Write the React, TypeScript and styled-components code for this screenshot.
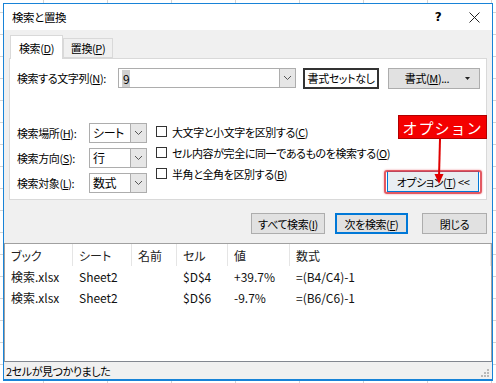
import React from 'react';
import styled, {createGlobalStyle} from 'styled-components';

const Global = createGlobalStyle`
  html, body {
    margin: 0;
    padding: 0;
    width: 496px;
    height: 383px;
    overflow: hidden;
    background-color: #fff;
    background-image:
      linear-gradient(to right, transparent 43px, #d4d4d4 43px, #d4d4d4 44px, transparent 44px),
      linear-gradient(to bottom, transparent 12px, #d4d4d4 12px, #d4d4d4 13px, transparent 13px);
    background-size: 64px 100%, 100% 22px;
    font-family: 'Noto Sans CJK JP', 'Noto Sans', sans-serif;
    font-size: 11px;
    font-feature-settings: 'palt';
    letter-spacing: -0.4px;
    white-space: nowrap;
    color: #000;
  }
`;

const Stage = styled.div`
  position: relative;
  width: 496px;
  height: 383px;
  padding: 3px 0 0 3px;
  box-sizing: border-box;
`;

const Dialog = styled.div`
  width: 490px;
  height: 378px;
  box-sizing: border-box;
  border: 1px solid #1883d7;
  border-bottom-width: 2px;
  display: flex;
  flex-direction: column;
  background: #f0f0f0;
`;

const TitleBar = styled.div`
  height: 26px;
  flex: none;
  background: #fff;
  display: flex;
  align-items: center;
  padding-left: 8px;
  font-size: 11.5px;
`;

const Title = styled.span`
  flex: 1;
`;

const TitleIcon = styled.span`
  width: 36px;
  display: flex;
  align-items: center;
  justify-content: center;
  font-size: 12px;
  font-weight: bold;
  font-family: 'DejaVu Sans', sans-serif;
`;

const Body = styled.div`
  flex: 1;
  display: flex;
  flex-direction: column;
  min-height: 0;
`;

const Tabs = styled.div`
  display: flex;
  align-items: flex-end;
  margin-top: 5px;
  padding-left: 6px;
  position: relative;
  z-index: 1;
`;

const Tab = styled.div<{$active?: boolean}>`
  box-sizing: border-box;
  height: ${p => (p.$active ? 24 : 20)}px;
  width: ${p => (p.$active ? 53 : 50)}px;
  background: ${p => (p.$active ? '#fff' : '#f0f0f0')};
  border: 1px solid #d9d9d9;
  border-bottom: ${p => (p.$active ? 'none' : '1px solid #d9d9d9')};
  margin-bottom: ${p => (p.$active ? -1 : 0)}px;
  display: flex;
  align-items: center;
  justify-content: center;
  padding-top: ${p => (p.$active ? 1 : 0)}px;
`;

const Panel = styled.div`
  margin: 0 5px;
  height: 142px;
  box-sizing: border-box;
  background: #fff;
  border: 1px solid #d9d9d9;
  padding: 9px 7px 6px 7px;
  display: flex;
  flex-direction: column;
`;

const Row = styled.div`
  display: flex;
  align-items: center;
  height: 20px;
`;

const FindLabel = styled.span`
  width: 101px;
  flex: none;
`;

const Combo = styled.div<{$width: number}>`
  width: ${p => p.$width}px;
  flex: none;
  height: 20px;
  box-sizing: border-box;
  border: 1px solid #adadad;
  display: flex;
  background: #fff;
`;

const ComboText = styled.span<{$selected?: boolean}>`
  flex: 1;
  display: flex;
  align-items: center;
  padding-left: 3px;
  font-size: 12px;

  span {
    background: ${p => (p.$selected ? '#cfcfcf' : 'transparent')};
    padding: 0 1px;
  }
`;

const ComboArrow = styled.span`
  width: 15px;
  border-left: 1px solid #adadad;
  background: #e6e6e6;
  display: flex;
  align-items: center;
  justify-content: center;
`;

const Button = styled.button<{$width: number; $tone?: 'plain' | 'strong' | 'default' | 'focus'}>`
  width: ${p => p.$width}px;
  flex: none;
  height: 21px;
  box-sizing: border-box;
  font-family: inherit;
  font-size: 11px;
  font-feature-settings: 'palt';
  letter-spacing: -0.4px;
  white-space: nowrap;
  color: #000;
  padding: 0;
  display: flex;
  align-items: center;
  justify-content: center;
  background: ${p => (p.$tone === 'strong' ? '#fff' : p.$tone === 'focus' ? '#e9eef2' : '#e1e1e1')};
  border: ${p =>
    p.$tone === 'strong'
      ? '2px solid #333'
      : p.$tone === 'default' || p.$tone === 'focus'
        ? '1px solid #0078d7'
        : '1px solid #adadad'};
  box-shadow: ${p => (p.$tone === 'default' ? 'inset 0 0 0 1px #0078d7' : 'none')};
`;

const Caret = styled.svg`
  margin-left: auto;
  margin-right: 9px;
`;

const Options = styled.div`
  display: flex;
  margin-top: 34px;
  flex: 1;
`;

const SelectCol = styled.div`
  display: flex;
  flex-direction: column;
  gap: 4px;
  flex: none;
`;

const SelectRow = styled.div`
  display: flex;
  align-items: center;
  height: 21px;
`;

const SelectLabel = styled.span`
  width: 72px;
`;

const CheckCol = styled.div`
  display: flex;
  flex-direction: column;
  margin-left: 9px;
  margin-top: -1px;
  flex: none;
`;

const CheckRow = styled.label`
  display: flex;
  align-items: center;
  height: 21px;
  gap: 5px;
`;

const Box = styled.span`
  width: 11px;
  height: 11px;
  box-sizing: border-box;
  border: 1px solid #333;
  background: #fff;
`;

const OptionSlot = styled.div`
  flex: 1;
  min-width: 0;
  display: flex;
  align-items: flex-end;
  justify-content: flex-end;
  padding-bottom: 1px;
`;

const ButtonBar = styled.div`
  display: flex;
  justify-content: flex-end;
  margin-top: 13px;
  padding-right: 5px;
  gap: 10px;

  > :last-child {
    margin-left: 4px;
  }
`;

const List = styled.div`
  margin-top: 9px;
  flex: 1;
  background: #fff;
  border: 1px solid #a0a0a0;
  border-bottom-color: #828790;
  display: flex;
  flex-direction: column;
  font-size: 12px;
  letter-spacing: 0;
`;

const Grid = styled.div`
  display: grid;
  grid-template-columns: 68px 59px 45px 51px 62px 1fr;
`;

const HeadCell = styled.div`
  height: 22px;
  display: flex;
  align-items: center;
  padding-left: 6px;
  border-right: 1px solid #e5e5e5;
  color: #222;
`;

const Cell = styled.div`
  height: 21px;
  display: flex;
  align-items: center;
  padding-left: 6px;
  color: #111;
`;

const Status = styled.div`
  height: 17px;
  flex: none;
  display: flex;
  align-items: center;
  padding-left: 2px;
  position: relative;
`;

const Grip = styled.svg`
  position: absolute;
  right: 2px;
  bottom: 1px;
`;

const Callout = styled.div`
  position: absolute;
  left: 398px;
  top: 115px;
  width: 89px;
  height: 24px;
  box-sizing: border-box;
  background: #f40000;
  border: 1px solid #b00000;
  color: #fff;
  font-size: 15px;
  font-feature-settings: normal;
  display: flex;
  align-items: center;
  justify-content: center;
  letter-spacing: 1px;
`;

const Highlight = styled.div`
  position: absolute;
  left: 384px;
  top: 170px;
  width: 98px;
  height: 24px;
  box-sizing: border-box;
  border: 2px solid rgba(222, 60, 70, 0.85);
  border-radius: 3px;
  box-shadow: 0 0 2px rgba(222, 60, 70, 0.6);
`;

const Arrow = styled.svg`
  position: absolute;
  left: 430px;
  top: 139px;
`;

const Chevron = () => (
  <svg width="9" height="6" viewBox="0 0 9 6">
    <path d="M1 1 L4.5 4.5 L8 1" fill="none" stroke="#555" strokeWidth="1" />
  </svg>
);

const Select = ({value}: {value: string}) => (
  <Combo $width={58}>
    <ComboText>{value}</ComboText>
    <ComboArrow>
      <Chevron />
    </ComboArrow>
  </Combo>
);

const columns = ['ブック', 'シート', '名前', 'セル', '値', '数式'];
const rows = [
  ['検索.xlsx', 'Sheet2', '', '$D$4', '+39.7%', '=(B4/C4)-1'],
  ['検索.xlsx', 'Sheet2', '', '$D$6', '-9.7%', '=(B6/C6)-1'],
];

export default function App() {
  return (
    <Stage>
      <Global />
      <Dialog>
        <TitleBar>
          <Title>検索と置換</Title>
          <TitleIcon>?</TitleIcon>
          <TitleIcon>
            <svg width="11" height="11" viewBox="0 0 11 11">
              <path d="M0.5 0.5 L10.5 10.5 M10.5 0.5 L0.5 10.5" stroke="#222" strokeWidth="1" />
            </svg>
          </TitleIcon>
        </TitleBar>
        <Body>
          <Tabs>
            <Tab $active>
              検索(<u>D</u>)
            </Tab>
            <Tab>
              置換(<u>P</u>)
            </Tab>
          </Tabs>
          <Panel>
            <Row>
              <FindLabel>
                検索する文字列(<u>N</u>):
              </FindLabel>
              <Combo $width={178}>
                <ComboText $selected>
                  <span>9</span>
                </ComboText>
                <ComboArrow>
                  <Chevron />
                </ComboArrow>
              </Combo>
              <Button $width={76} $tone="strong" style={{marginLeft: 7}}>
                書式セットなし
              </Button>
              <Button $width={92} style={{marginLeft: 9}}>
                <span style={{marginLeft: 'auto'}}>
                  書式(<u>M</u>)...
                </span>
                <Caret width="5" height="3" viewBox="0 0 5 3">
                  <path d="M0 0 L5 0 L2.5 3 Z" fill="#222" />
                </Caret>
              </Button>
            </Row>
            <Options>
              <SelectCol>
                <SelectRow>
                  <SelectLabel>
                    検索場所(<u>H</u>):
                  </SelectLabel>
                  <Select value="シート" />
                </SelectRow>
                <SelectRow>
                  <SelectLabel>
                    検索方向(<u>S</u>):
                  </SelectLabel>
                  <Select value="行" />
                </SelectRow>
                <SelectRow>
                  <SelectLabel>
                    検索対象(<u>L</u>):
                  </SelectLabel>
                  <Select value="数式" />
                </SelectRow>
              </SelectCol>
              <CheckCol>
                <CheckRow>
                  <Box />
                  <span>
                    大文字と小文字を区別する(<u>C</u>)
                  </span>
                </CheckRow>
                <CheckRow>
                  <Box />
                  <span>
                    セル内容が完全に同一であるものを検索する(<u>O</u>)
                  </span>
                </CheckRow>
                <CheckRow>
                  <Box />
                  <span>
                    半角と全角を区別する(<u>B</u>)
                  </span>
                </CheckRow>
              </CheckCol>
              <OptionSlot>
                <Button $width={92} $tone="focus">
                  オプション(<u>T</u>)&nbsp;&lt;&lt;
                </Button>
              </OptionSlot>
            </Options>
          </Panel>
          <ButtonBar>
            <Button $width={74}>
              すべて検索(<u>I</u>)
            </Button>
            <Button $width={73} $tone="default">
              次を検索(<u>F</u>)
            </Button>
            <Button $width={65}>閉じる</Button>
          </ButtonBar>
          <List>
            <Grid>
              {columns.map(c => (
                <HeadCell key={c}>{c}</HeadCell>
              ))}
              {rows.map((r, i) =>
                r.map((v, j) => <Cell key={`${i}-${j}`}>{v}</Cell>),
              )}
            </Grid>
          </List>
          <Status>
            2セルが見つかりました
            <Grip width="10" height="10" viewBox="0 0 10 10">
              <rect x="7" y="1" width="2" height="2" fill="#b8b8b8" />
              <rect x="4" y="4" width="2" height="2" fill="#b8b8b8" />
              <rect x="7" y="4" width="2" height="2" fill="#b8b8b8" />
              <rect x="1" y="7" width="2" height="2" fill="#b8b8b8" />
              <rect x="4" y="7" width="2" height="2" fill="#b8b8b8" />
              <rect x="7" y="7" width="2" height="2" fill="#b8b8b8" />
            </Grip>
          </Status>
        </Body>
      </Dialog>
      <Callout>オプション</Callout>
      <Highlight />
      <Arrow width="20" height="46" viewBox="0 0 20 46">
        <path d="M10 0 L9 38" stroke="#e00000" strokeWidth="2" fill="none" />
        <path d="M4.5 35 L9 45 L13.5 35 Z" fill="#e00000" />
      </Arrow>
    </Stage>
  );
}
